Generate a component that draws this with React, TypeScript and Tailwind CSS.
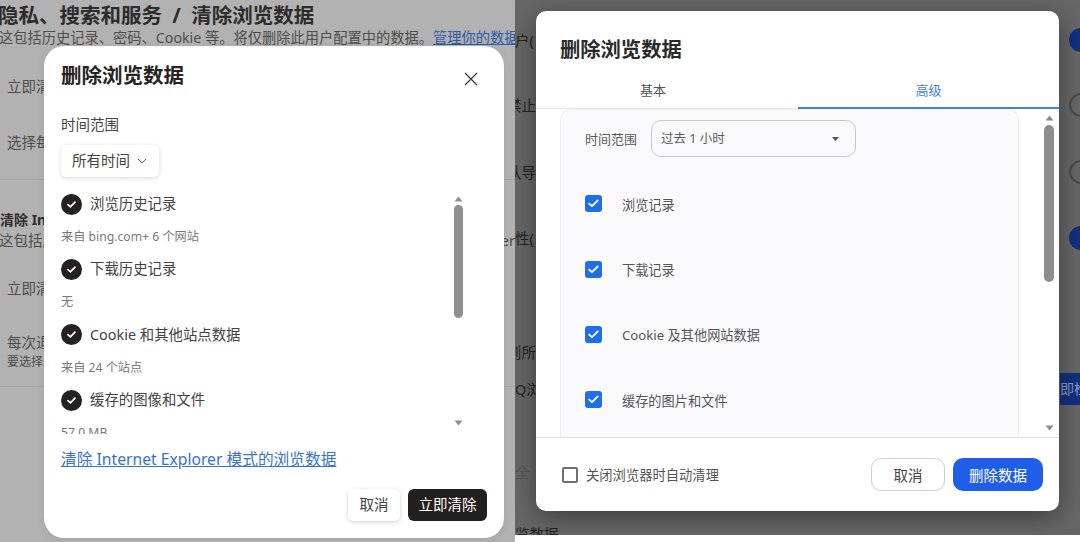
import React from "react";

const font = { fontFamily: '"Noto Sans", "Noto Sans CJK SC", sans-serif' };

function Scrollbar({ thumb, top, bottom, color, w }: { thumb: string; top: string; bottom: string; color: string; w: string }) {
  return (
    <div className={`flex flex-col items-center self-stretch ${w} ${top} ${bottom}`}>
      <svg width="9" height="6" viewBox="0 0 9 6" className="shrink-0"><path d="M4.5 0.5 L8.5 5.5 L0.5 5.5 Z" fill={color} /></svg>
      <div className={`w-full rounded-full shrink-0 ${thumb}`} style={{ backgroundColor: color }} />
      <div className="flex-1" />
      <svg width="9" height="6" viewBox="0 0 9 6" className="shrink-0"><path d="M0.5 0.5 L8.5 0.5 L4.5 5.5 Z" fill={color} /></svg>
    </div>
  );
}

function RoundCheck() {
  return (
    <span className="flex h-[21px] w-[21px] shrink-0 items-center justify-center rounded-full bg-[#25211f]">
      <svg width="11" height="9" viewBox="0 0 11 9" fill="none"><path d="M2 4.6 L4.4 6.8 L9 2.2" stroke="#fff" strokeWidth="1.7" strokeLinecap="round" strokeLinejoin="round" /></svg>
    </span>
  );
}

function BlueCheck() {
  return (
    <span className="flex h-[17px] w-[17px] shrink-0 items-center justify-center rounded-[3px] bg-[#1f70e6]">
      <svg width="13" height="11" viewBox="0 0 13 11" fill="none"><path d="M2.2 5.6 L5 8.2 L10.8 2.4" stroke="#fff" strokeWidth="1.8" strokeLinecap="round" strokeLinejoin="round" /></svg>
    </span>
  );
}

const leftItems = [
  ["浏览历史记录", "来自 bing.com+ 6 个网站"],
  ["下载历史记录", "无"],
  ["Cookie 和其他站点数据", "来自 24 个站点"],
  ["缓存的图像和文件", "57.0 MB"],
];

const rightItems = ["浏览记录", "下载记录", "Cookie 及其他网站数据", "缓存的图片和文件"];

function LeftModal() {
  return (
    <div className="absolute left-[44px] top-[46px] flex h-[492px] w-[460px] flex-col rounded-[20px] bg-white shadow-[0_2px_10px_rgba(0,0,0,0.08)]">
      <div className="flex items-center justify-between pl-[17px] pr-[25px] pt-[17px]">
        <h2 className="h-[24px] text-[20.5px] font-bold leading-[24px] text-[#262321]">删除浏览数据</h2>
        <svg width="16" height="16" viewBox="0 0 16 16" fill="none" className="mt-[8px]"><path d="M2 2 L14 14 M14 2 L2 14" stroke="#3a3a3a" strokeWidth="1.3" /></svg>
      </div>
      <div className="mt-[27px] h-[20px] pl-[17px] text-[14.5px] leading-[20px] text-[#4a4744]">时间范围</div>
      <div className="ml-[17px] mt-[11px] flex h-[32px] w-[98px] items-center gap-[7px] rounded-[5px] bg-white pl-[11px] text-[14.5px] text-[#45423f] shadow-[0_1px_4px_rgba(0,0,0,0.16)]">
        <span>所有时间</span>
        <svg width="10" height="6" viewBox="0 0 10 6" fill="none"><path d="M1 1 L5 5 L9 1" stroke="#666" strokeWidth="1" /></svg>
      </div>
      <div className="mt-[13px] flex h-[244px] pl-[17px]">
        <div className="h-full flex-1 overflow-hidden">
          {leftItems.map(([label, sub]) => (
            <div key={label} className="h-[65.4px]">
              <div className="flex h-[28px] items-center gap-[8px]">
                <RoundCheck />
                <span className="text-[14.4px] leading-[20px] text-[#45423f]">{label}</span>
              </div>
              <div className="mt-[9px] h-[20px] text-[12.2px] leading-[20px] text-[#7a7876]">{sub}</div>
            </div>
          ))}
        </div>
        <Scrollbar thumb="mt-[3px] h-[113px]" top="pt-[6px]" bottom="pb-[8px]" color="#8f8f8f" w="w-[9px] mr-[41px]" />
      </div>
      <a className="ml-[17px] mt-[15px] h-[20px] whitespace-nowrap text-[15.7px] leading-[20px] text-[#3874cb] underline">清除 Internet Explorer 模式的浏览数据</a>
      <div className="mt-[20px] flex justify-end gap-[8px] pr-[17px]">
        <button className="h-[32px] w-[52px] rounded-[5px] bg-white text-[14.5px] text-[#45423f] shadow-[0_1px_4px_rgba(0,0,0,0.18)]">取消</button>
        <button className="h-[32px] w-[79px] rounded-[6px] bg-[#231f1c] text-[14.5px] text-white">立即清除</button>
      </div>
    </div>
  );
}

function RightModal() {
  return (
    <div className="absolute left-[21px] top-[11px] flex h-[500px] w-[523px] flex-col overflow-hidden rounded-[10px] bg-white shadow-[0_6px_24px_rgba(0,0,0,0.4)]">
      <h2 className="h-[64px] pl-[24px] pt-[24px] text-[20.3px] font-bold leading-[28px] text-[#2a2a2a]">删除浏览数据</h2>
      <div className="flex h-[34px] border-b border-[#e8e8e8] text-[13px]">
        <div className="flex w-[262px] items-center justify-center pb-[3px] pr-[28px] text-[#555]">基本</div>
        <div className="-mb-px flex flex-1 items-center justify-center border-b-2 border-[#3f86d8] pb-[3px] text-[#3f86d8]">高级</div>
      </div>
      <div className="flex h-[328px]">
        <div className="ml-[24px] w-[459px] rounded-t-[10px] border-x border-t border-[#eeeef2] bg-[#fafafd] px-[24px] pt-[10px]">
          <div className="flex h-[37px] items-center gap-[14px]">
            <span className="text-[13px] text-[#5a5a5a]">时间范围</span>
            <div className="flex h-[37px] w-[205px] items-center justify-between rounded-[10px] border border-[#c9c9cc] pl-[9px] pr-[16px] pt-[1px] text-[12.5px] text-[#5a5a5a]">
              <span>过去 1 小时</span>
              <svg width="7" height="4" viewBox="0 0 7 4"><path d="M0 0 L7 0 L3.5 4 Z" fill="#555" /></svg>
            </div>
          </div>
          <div className="mt-[14px]">
            {rightItems.map((label) => (
              <div key={label} className="flex h-[65.4px] items-center gap-[20px]">
                <BlueCheck />
                <span className="pt-[2px] text-[13.2px] text-[#555]">{label}</span>
              </div>
            ))}
          </div>
        </div>
        <Scrollbar thumb="mt-[4px] h-[157px]" top="pt-[6px]" bottom="pb-[6px]" color="#8d8d8d" w="ml-[25px] w-[10px]" />
      </div>
      <div className="flex flex-1 items-center justify-between border-t border-[#e2e2e2] pl-[26px] pr-[16px]">
        <label className="flex items-center gap-[8px] text-[13.3px] text-[#555]">
          <span className="h-[16px] w-[16px] rounded-[2px] border-2 border-[#6f6f6f]" />
          关闭浏览器时自动清理
        </label>
        <div className="flex gap-[8px]">
          <button className="h-[33px] w-[74px] rounded-[10px] border border-[#d0d0d0] bg-white text-[14.5px] text-[#444]">取消</button>
          <button className="h-[33px] w-[90px] rounded-[10px] bg-[#1f5fe8] text-[14.5px] text-white">删除数据</button>
        </div>
      </div>
    </div>
  );
}

function BgRow({ className, text, children }: { className: string; text: string; children?: React.ReactNode }) {
  return (
    <div className={`flex items-center justify-between ${className}`}>
      <span className="whitespace-nowrap">{text}</span>
      {children}
    </div>
  );
}

export default function App() {
  return (
    <div className="flex h-[542px] w-[1080px] overflow-hidden bg-white" style={font}>
      <div className="relative h-[542px] w-[515px] shrink-0 overflow-hidden bg-[#b2b2b2] text-[#4d4d4d]">
        <div className="-ml-[2px] h-[28px] whitespace-nowrap pt-[1px] text-[20.5px] font-bold leading-[28px] text-[#2c2c2c] [word-spacing:5px]">隐私、搜索和服务 / 清除浏览数据</div>
        <div className="-ml-[1px] h-[20px] whitespace-nowrap text-[14.25px] leading-[20px]">
          这包括历史记录、密码、Cookie 等。将仅删除此用户配置中的数据。<span className="text-[#2f5aa8] underline">管理你的数据</span>
        </div>
        <div className="mt-[28px] h-[20px] pl-[7px] text-[14.5px] leading-[20px]">立即清除</div>
        <div className="mt-[36px] h-[20px] pl-[7px] text-[14.5px] leading-[20px]">选择每次</div>
        <div className="mt-[27px] border-t border-[#a6a6a6]" />
        <div className="mt-[30px] h-[20px] whitespace-nowrap text-[14px] font-bold leading-[20px] text-[#2c2c2c]">清除 Internet</div>
        <div className="flex h-[20px] justify-between whitespace-nowrap text-[14.5px] leading-[20px]">
          <span className="-ml-[1px]">这包括历史</span>
          <span>er</span>
        </div>
        <div className="mt-[28px] h-[20px] pl-[7px] text-[14.5px] leading-[20px]">立即清除</div>
        <div className="mt-[34px] h-[20px] pl-[7px] text-[14.5px] leading-[20px]">每次退出</div>
        <div className="mt-[1px] h-[18px] pl-[7px] text-[12px] leading-[18px]">要选择</div>
        <div className="mt-[15px] border-t border-[#a6a6a6]" />
        <LeftModal />
      </div>
      <div className="relative flex h-[535px] flex-1 flex-col overflow-hidden bg-[#666666] text-[14.5px] leading-[20px] text-[#222]">
        <BgRow className="mt-[28px] h-[24px]" text="户(">
          <span className="-mr-[13px] h-[24px] w-[24px] rounded-full bg-[#12307f]" />
        </BgRow>
        <BgRow className="mt-[41px] h-[24px] -ml-[8px]" text="禁止">
          <span className="-mr-[13px] h-[24px] w-[24px] rounded-full border-2 border-[#4a4a4a]" />
        </BgRow>
        <BgRow className="mt-[43px] h-[24px] -ml-[8px]" text="认导">
          <span className="-mr-[13px] h-[24px] w-[24px] rounded-full border-2 border-[#4a4a4a]" />
        </BgRow>
        <BgRow className="mt-[42px] h-[24px]" text="性(">
          <span className="-mr-[13px] h-[24px] w-[24px] rounded-full bg-[#12307f]" />
        </BgRow>
        <BgRow className="mt-[92px] h-[20px] -ml-[8px]" text="则所" />
        <BgRow className="mt-[11px] h-[32px]" text="Q浏览">
          <span className="h-[32px] w-[20px] overflow-hidden whitespace-nowrap bg-[#12307f] text-[14px] leading-[32px] text-[#8c9ac0]">即检</span>
        </BgRow>
        <BgRow className="mt-[57px] h-[20px] text-[#555]" text="全" />
        <BgRow className="mt-[42px] h-[20px] shrink-0" text="览数据" />
        <RightModal />
      </div>
    </div>
  );
}
